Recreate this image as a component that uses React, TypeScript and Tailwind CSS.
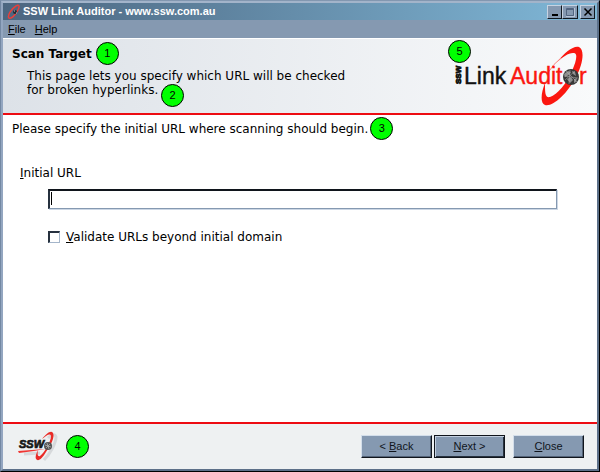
import React from 'react';

const verdana = "font-['DejaVu_Sans',sans-serif]";
const arial = "font-['Liberation_Sans',sans-serif]";

function Marker({ n, className = '' }: { n: number; className?: string }) {
  return (
    <span
      className={`flex size-[23px] shrink-0 items-center justify-center rounded-full border border-black bg-[#00ff00] text-[11px] leading-none text-black ${arial} ${className}`}
    >
      {n}
    </span>
  );
}

function RingIcon() {
  return (
    <svg width="14" height="16" viewBox="0 0 14 16" aria-hidden="true">
      <path
        d="M9 2C12 0 13 2 11 6C8 12 4 15 2 14C0 12 4 5 9 2Z"
        fill="none"
        stroke="#e8403c"
        strokeWidth="1.500"
      />
      <circle cx="8" cy="8" r="2" fill="#222b35" />
      <path d="M7 7h1M9 9h1" stroke="#b9c2ca" />
    </svg>
  );
}

function LinkAuditorLogo() {
  return (
    <svg width="134" height="62" viewBox="0 0 134 62" role="img" aria-label="SSW Link Auditor">
      <g transform="translate(-3 -1)">
        <path
          d="M106 17C114 7 123 0 128 2C134 5 132 19 125 32C116 49 102 62 94 60C89 58 90 48 94 38C94 48 94 53 99 52C106 50 116 38 121 26C126 15 127 7 122 8C117 8 112 12 106 17Z"
          fill="#fb1710"
        />
        <path d="M96 29Q103 18 110 13" fill="none" stroke="#fb8580" strokeWidth="1" />
      </g>
      <text
        transform="translate(7 38) rotate(-90)"
        fontFamily="Liberation Sans, sans-serif"
        fontSize="8"
        fontWeight="700"
        stroke="#111"
        strokeWidth="0.8"
      >
        SSW
      </text>
      <text x="10" y="38" fontFamily="Liberation Sans, sans-serif" fontSize="23" fill="#111" stroke="#111" strokeWidth="0.4">
        Link
      </text>
      <text x="56" y="38" fontFamily="Liberation Sans, sans-serif" fontSize="23" fill="#fb1710" stroke="#fb1710" strokeWidth="0.4">
        Audit
      </text>
      <circle cx="117" cy="31" r="8" fill="#383838" />
      <path
        d="M110 28l4-3 3 1-2 3-4 2ZM118 25l3 1 1 4-3-2ZM113 33l4-2 2 3-3 3ZM120 33l3-1-1 4-2 1Z"
        fill="#8e8e8e"
      />
      <path d="M112 25l11 11M111 34l10-9M116 24l-1 14M110 30l14 2" stroke="#b5b5b5" strokeWidth="0.5" />
      <text x="125" y="38" fontFamily="Liberation Sans, sans-serif" fontSize="23" fill="#fb1710" stroke="#fb1710" strokeWidth="0.4">
        r
      </text>
    </svg>
  );
}

function SswLogo() {
  return (
    <svg width="42" height="34" viewBox="0 0 42 34" role="img" aria-label="SSW">
      <path
        d="M30 8C34 4 37 4 38 7C38 13 32 24 26 30M6 24L22 23"
        fill="none"
        stroke="#d6d9db"
        strokeWidth="3"
      />
      <path
        d="M24 9C29 3 33 0 35 3C37 7 33 15 28 22C24 29 20 32 18 29C17 27 18 24 20 20C19 25 20 27 22 26C27 22 33 11 33 6C32 3 29 5 24 9Z"
        fill="#e92b27"
      />
      <path d="M0 21L27 19L16 21L1 23Z" fill="#f03632" />
      <text
        x="1"
        y="18"
        fontFamily="Liberation Sans, sans-serif"
        fontSize="11"
        fontWeight="700"
        fontStyle="italic"
        fill="#171717"
        stroke="#171717"
        strokeWidth="0.7"
      >
        SSW
      </text>
      <circle cx="30" cy="16" r="4" fill="#555" />
      <path d="M27 15l6 2M29 13l2 6M28 18l4-4" stroke="#bbb" strokeWidth="0.7" />
    </svg>
  );
}

const captionButton =
  'flex h-[14px] items-center justify-center border border-t-[#c7d3e2] border-l-[#c7d3e2] border-r-[#101820] border-b-[#101820] bg-[#8599b1]';

function CaptionButtons() {
  return (
    <div className="flex">
      <button type="button" aria-label="Minimize" className={`${captionButton} w-[15px]`}>
        <svg width="10" height="10" aria-hidden="true">
          <path d="M2 8h6" stroke="#000" strokeWidth="2" />
        </svg>
      </button>
      <button type="button" aria-label="Maximize" className={`${captionButton} w-4`}>
        <svg width="10" height="10" aria-hidden="true">
          <path d="M1.500 1.500h7v7h-7zM1 2.500h8" fill="none" stroke="#526580" />
          <path d="M1 9.500h9M9.500 1v8" stroke="#b8c6d8" />
        </svg>
      </button>
      <button type="button" aria-label="Close window" className={`${captionButton} ml-[2px] w-[15px]`}>
        <svg width="10" height="10" aria-hidden="true">
          <path d="M1.500 1.500l7 7M8.500 1.500l-7 7" stroke="#000" strokeWidth="1.500" />
        </svg>
      </button>
    </div>
  );
}

function WizardButton({ children, primary = false }: { children: React.ReactNode; primary?: boolean }) {
  const edge = primary
    ? 'border-[#10151c] shadow-[inset_1px_1px_#c3d0e0,inset_-1px_-1px_#26313e]'
    : 'border-t-[#d3deea] border-l-[#d3deea] border-r-[#10151c] border-b-[#10151c] shadow-[inset_-1px_-1px_#536378]';
  return (
    <button
      type="button"
      className={`h-[23px] w-[71px] border bg-[#8599b1] text-[11px] leading-none text-[#10151c] ${arial} ${edge}`}
    >
      {children}
    </button>
  );
}

export default function App() {
  return (
    <div
      className={`flex min-h-screen flex-col border border-t-[#8297b0] border-r-black border-b-black border-l-[#7388a3] text-[12px] text-black ${verdana}`}
    >
      <div className="flex flex-1 flex-col border-2 border-t-[#a3b4ca] border-r-[#5c7089] border-b-[#5c7089] border-l-[#93a6c0] bg-white">
        <header className="flex h-[17px] items-center justify-between bg-linear-to-r from-[#4c6680] to-[#80b8d8] pr-[2px] pl-1">
          <h1 className={`flex items-center gap-[2px] text-[11px] leading-none font-bold text-white ${arial}`}>
            <RingIcon />
            SSW Link Auditor - www.ssw.com.au
          </h1>
          <CaptionButtons />
        </header>

        <nav className={`flex h-[18px] items-center gap-[9px] bg-[#8599b1] pl-[5px] text-[11px] leading-none ${arial}`}>
          <button type="button"><u>F</u>ile</button>
          <button type="button"><u>H</u>elp</button>
        </nav>

        <section className="relative flex h-[75px] justify-between border-t border-white bg-linear-to-r from-[#dde2e8] to-[#f9fafb]">
          <div className="pt-[3px] pl-[9px]">
            <div className="flex items-center gap-1">
              <h2 className="font-bold">Scan Target</h2>
              <Marker n={1} />
            </div>
            <p className="pt-1 pl-[15px] leading-[14px]">
              This page lets you specify which URL will be checked
              <br />
              for broken hyperlinks.
            </p>
          </div>
          <Marker n={2} className="absolute top-[45px] left-[158px]" />
          <div className="pt-[7px] pr-[9px]">
            <LinkAuditorLogo />
          </div>
          <Marker n={5} className="absolute top-[1px] right-[126px]" />
        </section>

        <main className="flex-1 border-t-2 border-b-2 border-[#ed0c12] pl-[9px]">
          <div className="flex items-center gap-[2px] pt-[2px]">
            <p>Please specify the initial URL where scanning should begin.</p>
            <Marker n={3} />
          </div>
          <div className="pt-[25px] pr-10 pl-2">
            <label htmlFor="initial-url" className="block leading-4"><u>I</u>nitial URL</label>
            <div className="pt-2 pl-7">
              <div className="relative">
                <input
                  id="initial-url"
                  type="text"
                  className="block h-5 w-full border border-t-2 border-l-2 border-t-[#10151c] border-l-[#26313e] border-r-[#8599b1] border-b-[#8599b1] bg-white px-[2px] caret-transparent shadow-[1px_1px_#ccd7e5] outline-none"
                />
                <span aria-hidden="true" className="pointer-events-none absolute top-[3px] left-[3px] h-[13px] w-px bg-black" />
              </div>
              <label className="flex items-center gap-[6px] pt-5 leading-4">
                <input
                  type="checkbox"
                  className="size-3 appearance-none border border-t-2 border-l-2 border-t-[#26313e] border-l-[#26313e] border-r-[#a4b5ca] border-b-[#a4b5ca] bg-white checked:bg-[#26313e]"
                />
                <span><u>V</u>alidate URLs beyond initial domain</span>
              </label>
            </div>
          </div>
        </main>

        <footer className="flex h-[45px] items-center justify-between bg-[#eef1f2] pr-[13px] pl-[15px]">
          <div className="flex items-center gap-[6px]">
            <SswLogo />
            <Marker n={4} />
          </div>
          <div className="flex items-center">
            <WizardButton>&lt; <u>B</u>ack</WizardButton>
            <div className="pr-2 pl-[2px]">
              <WizardButton primary><u>N</u>ext &gt;</WizardButton>
            </div>
            <WizardButton><u>C</u>lose</WizardButton>
          </div>
        </footer>
      </div>
    </div>
  );
}
